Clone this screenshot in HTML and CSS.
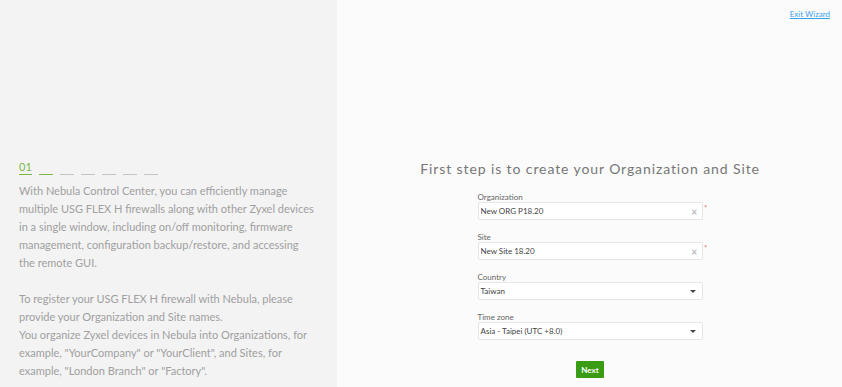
FILE: index.html
```html
<!DOCTYPE html>
<html lang="en">

<head>
    <meta charset="UTF-8">
    <meta name="viewport" content="width=device-width, initial-scale=1.0">
    <title>Nebula Wizard</title>
    <link rel="stylesheet" href="styles.css">
</head>

<body>
    <div class="wizard">
        <div class="intro">
            <div class="steps">
                <span class="step-num">01</span>
                <span class="dash active"></span>
                <span class="dash"></span>
                <span class="dash"></span>
                <span class="dash"></span>
                <span class="dash"></span>
                <span class="dash"></span>
            </div>
            <p class="intro-text">
                With Nebula Control Center, you can efficiently manage multiple USG FLEX H firewalls along with other
                Zyxel devices in a single window, including on/off monitoring, firmware management, configuration
                backup/restore, and accessing the remote GUI.
            </p>
            <p class="intro-text">
                To register your USG FLEX H firewall with Nebula, please provide your Organization and Site names.<br>
                You organize Zyxel devices in Nebula into Organizations, for example, "YourCompany" or "YourClient",
                and Sites, for example, "London Branch" or "Factory".
            </p>
        </div>

        <div class="main">
            <div class="topbar">
                <a href="#" class="exit-link">Exit Wizard</a>
            </div>
            <h1>First step is to create your Organization and Site</h1>
            <form class="site-form" onsubmit="return false;">
                <div class="form-group">
                    <label for="orgName">Organization</label>
                    <div class="field">
                        <input type="text" id="orgName" value="New ORG P18.20">
                        <span class="clear">&times;</span>
                        <span class="required">*</span>
                    </div>
                </div>
                <div class="form-group">
                    <label for="siteName">Site</label>
                    <div class="field">
                        <input type="text" id="siteName" value="New Site 18.20">
                        <span class="clear">&times;</span>
                        <span class="required">*</span>
                    </div>
                </div>
                <div class="form-group">
                    <label>Country</label>
                    <div class="field select">
                        <span class="value">Taiwan</span>
                        <span class="caret"></span>
                    </div>
                </div>
                <div class="form-group">
                    <label>Time zone</label>
                    <div class="field select">
                        <span class="value">Asia - Taipei (UTC +8.0)</span>
                        <span class="caret"></span>
                    </div>
                </div>
                <button type="button">Next</button>
            </form>
        </div>
    </div>
</body>

</html>
```

FILE: styles.css
```css
body {
    margin: 0;
    font-family: Lato, "Open Sans", sans-serif;
    background-color: #fbfbfb;
}

.wizard {
    display: flex;
    height: 387px;
    overflow: hidden;
}

.intro {
    width: 318px;
    flex-shrink: 0;
    background-color: #f3f3f3;
    border-right: 1px solid #fdfdfd;
    padding: 159px 0 0 19px;
}

.steps {
    display: flex;
    align-items: flex-end;
    gap: 7px;
    height: 16px;
    margin-bottom: 7px;
}

.step-num {
    color: #7cb842;
    font-size: 11px;
    line-height: 12px;
    padding-bottom: 1px;
    border-bottom: 1px solid #7cb842;
    width: 13px;
}

.dash {
    width: 14px;
    height: 1px;
    background-color: #c4c4c4;
}

.dash.active {
    background-color: #7cb842;
}

.intro-text {
    margin: 0 0 18px;
    width: 298px;
    color: #a0a0a0;
    font-size: 11px;
    line-height: 18px;
}

.main {
    flex: 1;
    display: flex;
    flex-direction: column;
    align-items: center;
}

.topbar {
    align-self: stretch;
    display: flex;
    justify-content: flex-end;
    padding: 9px 12px 0 0;
    height: 151px;
}

.exit-link {
    color: #3aa0e8;
    font-size: 8px;
}

h1 {
    margin: 0 0 15px;
    font-size: 14px;
    font-weight: normal;
    letter-spacing: 0.9px;
    color: #777;
}

.site-form {
    width: 225px;
    display: flex;
    flex-direction: column;
}

.form-group {
    margin-bottom: 12px;
}

label {
    display: block;
    font-size: 8px;
    line-height: 10px;
    color: #666;
}

.field {
    position: relative;
    display: flex;
    align-items: center;
    height: 16px;
    background: #fff;
    border: 1px solid #e6e6e6;
    border-radius: 2px;
}

.field input {
    flex: 1;
    border: none;
    background: transparent;
    padding: 0 0 0 2px;
    font-family: inherit;
    font-size: 8px;
    color: #444;
    outline: none;
}

.clear {
    color: #aaa;
    font-size: 11px;
    margin-right: 4px;
}

.required {
    position: absolute;
    right: -6px;
    top: 0;
    color: #f07070;
    font-size: 8px;
}

.select .value {
    flex: 1;
    padding-left: 2px;
    font-size: 8px;
    color: #444;
}

.caret {
    width: 0;
    height: 0;
    border-left: 3px solid transparent;
    border-right: 3px solid transparent;
    border-top: 3px solid #444;
    margin-right: 6px;
}

button {
    align-self: center;
    margin-top: 9px;
    width: 28px;
    height: 17px;
    padding: 0;
    border: none;
    border-radius: 1px;
    background-color: #3a9c14;
    color: #fff;
    font-family: inherit;
    font-size: 8px;
    font-weight: bold;
    cursor: pointer;
}
```
